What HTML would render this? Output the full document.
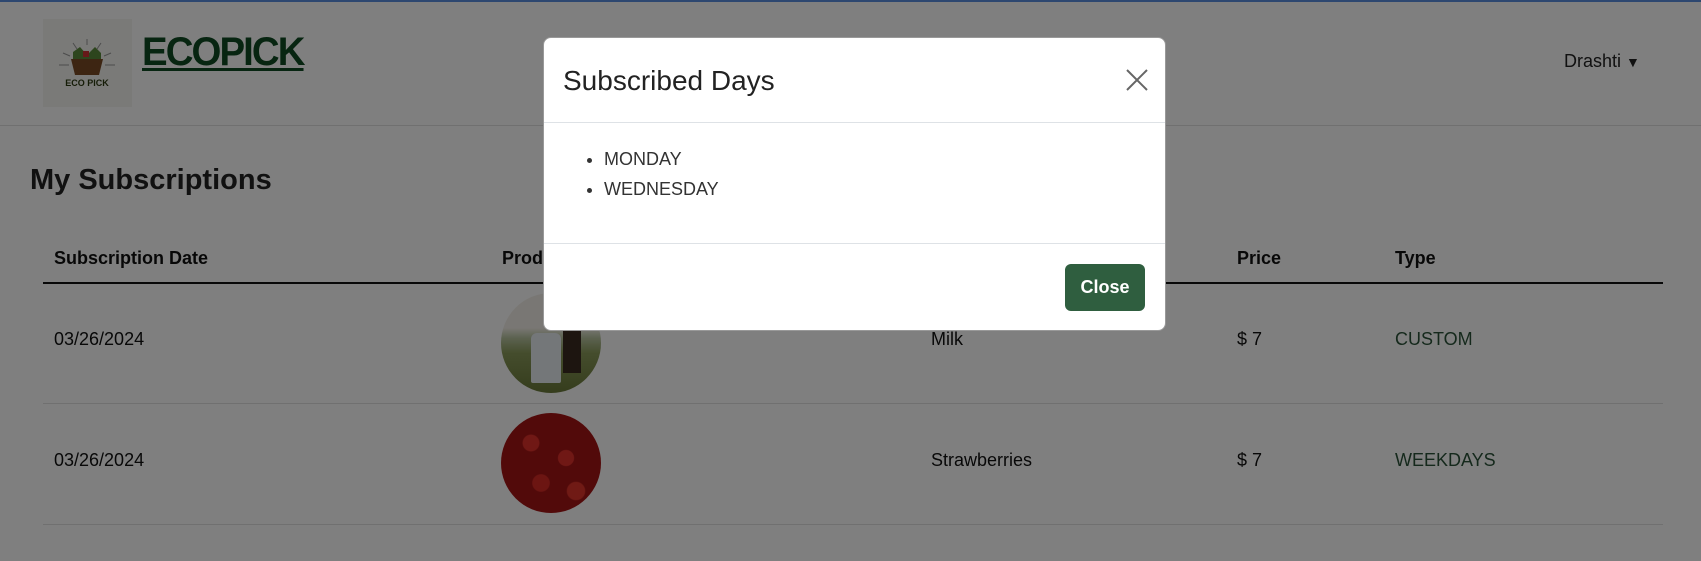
<!DOCTYPE html>
<html><head><meta charset="utf-8"><style>
*{box-sizing:border-box;margin:0;padding:0}
body{width:1701px;height:561px;overflow:hidden;background:#fff;font-family:"Liberation Sans",sans-serif;position:relative;color:#111}
.page{position:absolute;inset:0;background:#fff}
.ov{position:absolute;inset:0;background:rgba(0,0,0,.5)}
.abs{position:absolute}
</style></head><body>
<div class="page">
  <div class="abs" style="left:0;top:0;width:1701px;height:2px;background:#5b8fe0"></div>
  <div class="abs" style="left:43px;top:19px;width:89px;height:88px;background:#f4f4f0">
    <svg width="89" height="88" viewBox="0 0 89 88">
      <g stroke="#999" stroke-width="1"><line x1="44" y1="20" x2="44" y2="26"/><line x1="30" y1="24" x2="34" y2="30"/><line x1="58" y1="24" x2="54" y2="30"/><line x1="20" y1="34" x2="27" y2="37"/><line x1="68" y1="34" x2="61" y2="37"/><line x1="16" y1="46" x2="26" y2="46"/><line x1="62" y1="46" x2="72" y2="46"/></g>
      <path d="M30 33 L37 28 L44 36 L52 28 L58 34 L58 40 L30 40Z" fill="#5a8a3a"/>
      <rect x="40" y="32" width="6" height="6" fill="#c33"/>
      <path d="M28 40 H60 L56 56 H32Z" fill="#7a4a25"/>
      <text x="44" y="67" text-anchor="middle" font-family="Liberation Sans" font-weight="bold" font-size="9" fill="#2c3a10">ECO PICK</text>
    </svg>
  </div>
  <div class="abs" style="left:142px;top:30px;font-size:40px;font-weight:bold;color:#0f4a22;text-decoration:underline;text-decoration-thickness:3px;text-underline-offset:3px;letter-spacing:-2px;transform:scaleX(0.96);transform-origin:left">ECOPICK</div>
  <div class="abs" style="left:1564px;top:51px;font-size:18px;color:#222">Drashti <span style="font-size:14px">&#9660;</span></div>
  <div class="abs" style="left:0;top:125px;width:1701px;height:1px;background:#e0e0e0"></div>
  <div class="abs" style="left:30px;top:164px;font-size:29px;font-weight:bold;color:#222">My Subscriptions</div>
  <div class="abs" style="left:54px;top:248px;font-size:18px;font-weight:bold">Subscription Date</div>
  <div class="abs" style="left:502px;top:248px;font-size:18px;font-weight:bold">Product</div>
  <div class="abs" style="left:1237px;top:248px;font-size:18px;font-weight:bold">Price</div>
  <div class="abs" style="left:1395px;top:248px;font-size:18px;font-weight:bold">Type</div>
  <div class="abs" style="left:43px;top:282px;width:1620px;height:2px;background:#111"></div>
  <div class="abs" style="left:54px;top:329px;font-size:18px">03/26/2024</div>
  <div class="abs" style="left:501px;top:293px;width:100px;height:100px;border-radius:50%;background:linear-gradient(180deg,#f3efe8 0 35%,#b8c4a0 45%,#8a9a5a 60%,#6b7a3a 100%);overflow:hidden"><div style="position:absolute;left:30px;top:40px;width:30px;height:50px;background:#e8eef2;border-radius:6px 6px 2px 2px"></div><div style="position:absolute;left:62px;top:20px;width:18px;height:60px;background:#3a2a20"></div></div>
  <div class="abs" style="left:931px;top:329px;font-size:18px">Milk</div>
  <div class="abs" style="left:1237px;top:329px;font-size:18px">$ 7</div>
  <div class="abs" style="left:1395px;top:329px;font-size:18px;color:#2a5238">CUSTOM</div>
  <div class="abs" style="left:43px;top:403px;width:1620px;height:1px;background:#e0e0e0"></div>
  <div class="abs" style="left:54px;top:450px;font-size:18px">03/26/2024</div>
  <div class="abs" style="left:501px;top:413px;width:100px;height:100px;border-radius:50%;background:radial-gradient(circle at 30% 30%,#e0312a 0 8%,transparent 9%),radial-gradient(circle at 65% 45%,#e0312a 0 9%,transparent 10%),radial-gradient(circle at 40% 70%,#d82a25 0 9%,transparent 10%),radial-gradient(circle at 75% 78%,#e0352a 0 8%,transparent 9%),#a51515"></div>
  <div class="abs" style="left:931px;top:450px;font-size:18px">Strawberries</div>
  <div class="abs" style="left:1237px;top:450px;font-size:18px">$ 7</div>
  <div class="abs" style="left:1395px;top:450px;font-size:18px;color:#2a5238">WEEKDAYS</div>
  <div class="abs" style="left:43px;top:524px;width:1620px;height:1px;background:#e0e0e0"></div>
</div>
<div class="ov"></div>
<div class="abs" style="left:543px;top:37px;width:623px;height:294px;background:#fff;border-radius:8px;border:1px solid #999">
  <div class="abs" style="left:19px;top:27px;font-size:28px;color:#222">Subscribed Days</div>
  <svg class="abs" style="left:582px;top:31px" width="22" height="22" viewBox="0 0 22 22"><path d="M1 1L21 21M21 1L1 21" stroke="#666" stroke-width="2"/></svg>
  <div class="abs" style="left:0;top:84px;width:621px;height:1px;background:#dee2e6"></div>
  <ul class="abs" style="left:60px;top:106px;font-size:18px;line-height:30px;color:#333">
    <li>MONDAY</li><li>WEDNESDAY</li>
  </ul>
  <div class="abs" style="left:0;top:205px;width:621px;height:1px;background:#dee2e6"></div>
  <div class="abs" style="left:521px;top:226px;width:80px;height:47px;background:#2f5e3f;border-radius:6px;color:#fff;font-size:18px;font-weight:bold;text-align:center;line-height:47px">Close</div>
</div>
</body></html>
